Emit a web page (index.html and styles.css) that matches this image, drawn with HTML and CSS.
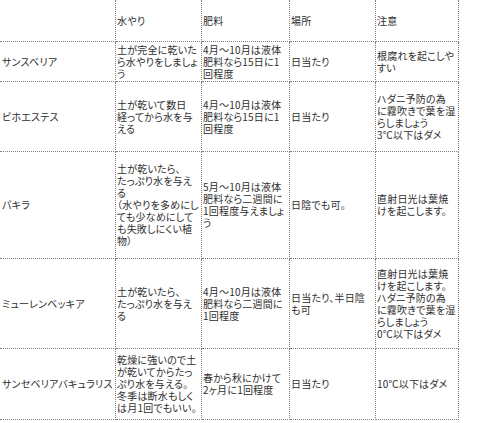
FILE: index.html
```html
<!DOCTYPE html>
<html lang="ja">
<head>
<meta charset="utf-8">
<link rel="stylesheet" href="styles.css">
</head>
<body>
<table class="care">
  <colgroup>
    <col class="c-name"><col class="c-water"><col class="c-feed"><col class="c-place"><col class="c-note">
  </colgroup>
  <tr class="r-head">
    <td class="name"></td>
    <td>水やり</td>
    <td>肥料</td>
    <td>場所</td>
    <td>注意</td>
  </tr>
  <tr class="r1">
    <td class="name">サンスベリア</td>
    <td>土が完全に乾いた<br>ら水やりをしましょ<br>う</td>
    <td>4月〜10月は液体<br>肥料なら15日に1<br>回程度</td>
    <td>日当たり</td>
    <td>根腐れを起こしや<br>すい</td>
  </tr>
  <tr class="r2">
    <td class="name">ビホエステス</td>
    <td>土が乾いて数日<br>経ってから水を与<br>える</td>
    <td>4月〜10月は液体<br>肥料なら15日に1<br>回程度</td>
    <td>日当たり</td>
    <td>ハダニ予防の為<br>に霧吹きで葉を湿<br>らしましょう<br>3℃以下はダメ</td>
  </tr>
  <tr class="r3">
    <td class="name">パキラ</td>
    <td>土が乾いたら、<br>たっぷり水を与え<br>る<br>（水やりを多めにし<br>ても少なめにして<br>も失敗しにくい植<br>物）</td>
    <td>5月〜10月は液体<br>肥料なら二週間に<br>1回程度与えましょ<br>う</td>
    <td>日陰でも可。</td>
    <td>直射日光は葉焼<br>けを起こします。</td>
  </tr>
  <tr class="r4">
    <td class="name">ミューレンベッキア</td>
    <td>土が乾いたら、<br>たっぷり水を与え<br>る</td>
    <td>4月〜10月は液体<br>肥料なら二週間に<br>1回程度</td>
    <td>日当たり、半日陰<br>も可</td>
    <td>直射日光は葉焼<br>けを起こします。<br>ハダニ予防の為<br>に霧吹きで葉を湿<br>らしましょう<br>0℃以下はダメ</td>
  </tr>
  <tr class="r5">
    <td class="name">サンセベリアバキュラリス</td>
    <td>乾燥に強いので土<br>が乾いてからたっ<br>ぷり水を与える。<br>冬季は断水もしく<br>は月1回でもいい。</td>
    <td>春から秋にかけて<br>2ヶ月に1回程度</td>
    <td>日当たり</td>
    <td>10℃以下はダメ</td>
  </tr>
</table>
</body>
</html>
```

FILE: styles.css
```css
html, body {
  margin: 0;
  padding: 0;
  background: #ffffff;
}

.care {
  border-collapse: separate;
  border-spacing: 0;
  table-layout: fixed;
  width: 459px;
  font-family: "Noto Sans CJK JP", "Noto Sans", sans-serif;
  font-size: 10px;
  line-height: 12px;
  letter-spacing: 0.2px;
  font-feature-settings: "palt";
  color: #2e2e2e;
}

.c-name { width: 116px; }
.c-water { width: 86px; }
.c-feed { width: 88px; }
.c-place { width: 86px; }
.c-note { width: 83px; }

.care td {
  box-sizing: border-box;
  padding: 0 0 0 1px;
  vertical-align: middle;
  white-space: nowrap;
  overflow: hidden;
  border-right: 1px dotted #808080;
  border-bottom: 1px dotted #808080;
}

.care td.name {
  padding-left: 2px;
}

.r-head { height: 42px; }
.r1 { height: 40px; }
.r2 { height: 70px; }
.r3 { height: 107px; }
.r4 { height: 90px; }
.r5 { height: 71px; }
```
